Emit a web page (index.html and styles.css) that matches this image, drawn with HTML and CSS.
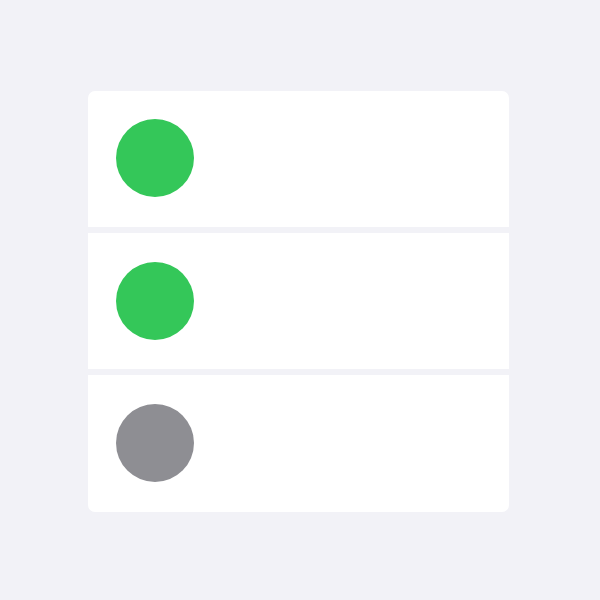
FILE: index.html
```html
<!DOCTYPE html>
<html lang="en">
<head>
  <meta charset="UTF-8">
  <title>Status List</title>
  <link rel="stylesheet" href="styles.css">
</head>
<body>
  <div class="list">
    <div class="row"><span class="dot on"></span></div>
    <div class="row"><span class="dot on"></span></div>
    <div class="row"><span class="dot off"></span></div>
  </div>
</body>
</html>
```

FILE: styles.css
```css
body {
  margin: 0;
  background: #f2f2f7;
  font-family: "Liberation Sans", sans-serif;
}
.list {
  margin: 90.5px 0 0 88px;
  width: 421px;
  height: 421px;
  display: flex;
  flex-direction: column;
  gap: 5.5px;
  border-radius: 7px;
  overflow: hidden;
}
.row {
  flex: 1;
  background: #ffffff;
  display: flex;
  align-items: center;
  padding-left: 28px;
}
.dot {
  width: 78px;
  height: 78px;
  border-radius: 50%;
  margin-top: -1px;
}
.dot.on {
  background: #34c759;
}
.dot.off {
  background: #8e8e93;
}
```
